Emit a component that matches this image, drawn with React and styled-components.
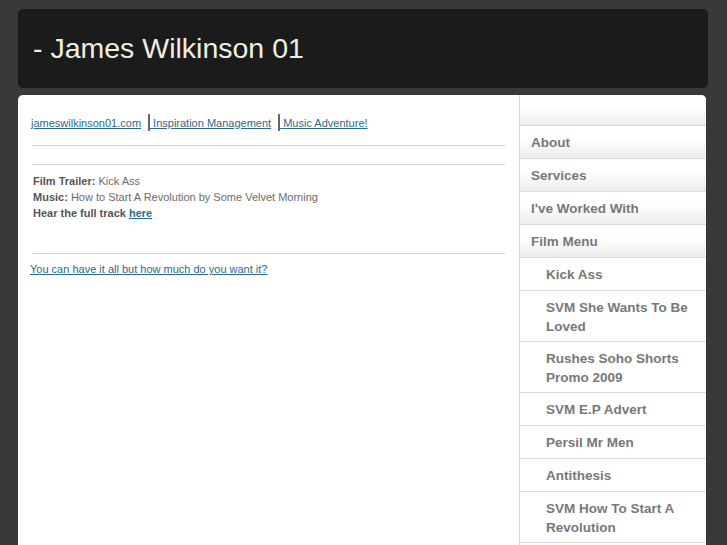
import React from "react";
import styled, { createGlobalStyle } from "styled-components";

const Global = createGlobalStyle`
  html, body { margin: 0; padding: 0; }
  body {
    background: #393939;
    font-family: "Liberation Sans", Arial, sans-serif;
    height: 545px;
    overflow: hidden;
  }
`;

const Page = styled.div`
  padding: 9px 19px 0 18px;
  display: flex;
  flex-direction: column;
  gap: 7px;
`;

const Header = styled.header`
  height: 79px;
  background: #1b1b1b;
  border-radius: 5px;
  display: flex;
  align-items: center;
  padding-left: 15px;
  box-sizing: border-box;
`;

const Title = styled.h1`
  margin: 0;
  font-weight: normal;
  font-size: 28.5px;
  color: #efeee2;
`;

const Main = styled.div`
  display: flex;
  background: #fff;
  border-radius: 5px 5px 0 0;
  margin-right: 2px;
  min-height: 460px;
`;

const Content = styled.div`
  width: 501px;
  box-sizing: border-box;
  padding: 19px 14px 0 12px;
`;

const LinkRow = styled.div`
  display: flex;
  align-items: center;
  font-size: 11px;
  height: 17px;
  padding-left: 1px;
`;

const A = styled.a`
  color: #2b6a89;
  text-decoration: underline;
  font-size: 11px;
  font-weight: ${(p) => (p.$bold ? "bold" : "normal")};
`;

const Bar = styled.span`
  display: inline-block;
  width: 2px;
  height: 17px;
  background: #666;
  margin-left: ${(p) => p.$ml || 8}px;
`;

const Rule = styled.hr`
  border: 0;
  border-top: 1px solid #d0d0d0;
  margin: ${(p) => p.$mt}px 0 0 2px;
  height: 0;
`;

const Info = styled.div`
  margin-top: 8px;
  padding-left: 3px;
  font-size: 11px;
  line-height: 16px;
  color: #6b6b6b;
`;

const Label = styled.b`
  color: #555;
`;

const Bottom = styled.div`
  margin-top: 5px;
`;

const Sidebar = styled.nav`
  flex: 1;
  border-left: 1px solid #d6d6d6;
  display: flex;
  flex-direction: column;
`;

const TopCap = styled.div`
  height: 30px;
  border-bottom: 1px solid #dcdcdc;
  background: linear-gradient(#ffffff 0%, #ffffff 45%, #ececec 100%);
  border-radius: 0 5px 0 0;
`;

const Item = styled.div`
  padding: 7px 12px 5px ${(p) => (p.$sub ? 26 : 11)}px;
  min-height: 20px;
  line-height: 19px;
  font-size: 13.5px;
  font-weight: bold;
  color: #787878;
  border-bottom: 1px solid #dcdcdc;
  background: ${(p) =>
    p.$sub ? "#fff" : "linear-gradient(#ffffff 0%, #ffffff 40%, #ececec 100%)"};
`;

const topItems = ["About", "Services", "I've Worked With", "Film Menu"];
const subItems = [
  "Kick Ass",
  "SVM She Wants To Be Loved",
  "Rushes Soho Shorts Promo 2009",
  "SVM E.P Advert",
  "Persil Mr Men",
  "Antithesis",
  "SVM How To Start A Revolution",
];

export default function App() {
  return (
    <>
      <Global />
      <Page>
        <Header>
          <Title>- James Wilkinson 01</Title>
        </Header>
        <Main>
          <Content>
            <LinkRow>
              <A href="#">jameswilkinson01.com</A>
              <Bar $ml={7} />
              <A href="#">&nbsp;Inspiration Management</A>
              <Bar $ml={7} />
              <A href="#">&nbsp;Music Adventure!</A>
            </LinkRow>
            <Rule $mt={14} />
            <Rule $mt={18} />
            <Info>
              <div>
                <Label>Film Trailer:</Label> Kick Ass
              </div>
              <div>
                <Label>Music:</Label> How to Start A Revolution by Some Velvet Morning
              </div>
              <div>
                <Label>Hear the full track</Label> <A href="#" $bold>here</A>
              </div>
            </Info>
            <Rule $mt={32} />
            <Bottom>
              <A href="#">You can have it all but how much do you want it?</A>
            </Bottom>
          </Content>
          <Sidebar>
            <TopCap />
            {topItems.map((t) => (
              <Item key={t}>{t}</Item>
            ))}
            {subItems.map((t) => (
              <Item key={t} $sub>
                {t}
              </Item>
            ))}
          </Sidebar>
        </Main>
      </Page>
    </>
  );
}
